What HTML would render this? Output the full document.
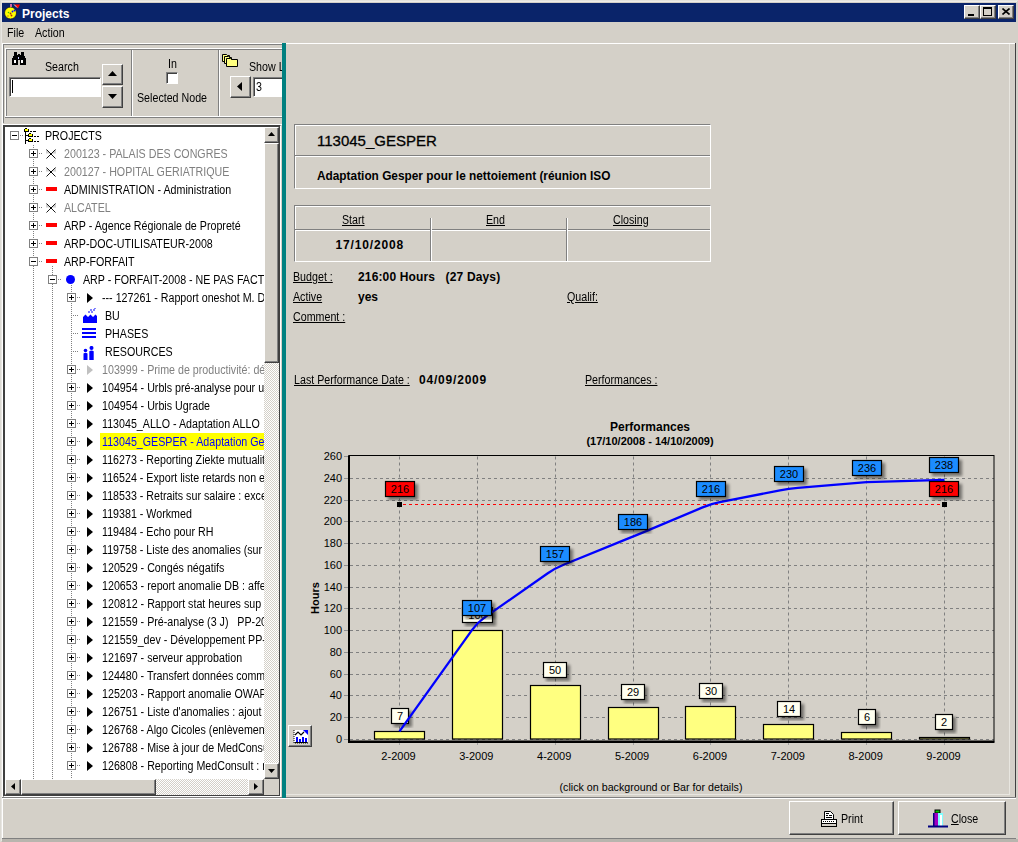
<!DOCTYPE html>
<html><head><meta charset="utf-8">
<style>
*{margin:0;padding:0;box-sizing:border-box}
html,body{width:1018px;height:842px;overflow:hidden;background:#D4D0C8;font-family:"Liberation Sans",sans-serif;font-size:11px;color:#000}
.a{position:absolute}
.t{position:absolute;white-space:pre;line-height:1}
.raised{position:absolute;background:#D4D0C8;border-top:1px solid #fff;border-left:1px solid #fff;border-right:1px solid #404040;border-bottom:1px solid #404040;box-shadow:inset -1px -1px 0 #808080}
.sunken{position:absolute;background:#fff;border-top:1px solid #808080;border-left:1px solid #808080;border-right:1px solid #fff;border-bottom:1px solid #fff;box-shadow:inset 1px 1px 0 #404040}
.tr,.w{font-size:12px;transform:scaleX(0.89);transform-origin:0 0}
.dith{background-color:#fff;background-image:linear-gradient(45deg,#D4D0C8 25%,transparent 25%,transparent 75%,#D4D0C8 75%),linear-gradient(45deg,#D4D0C8 25%,transparent 25%,transparent 75%,#D4D0C8 75%);background-size:2px 2px;background-position:0 0,1px 1px}
.hl{position:absolute;height:1px}
.vl{position:absolute;width:1px}
u{text-decoration:underline}
</style></head><body>
<!-- window frame -->
<div class="a" style="left:0;top:0;width:1018px;height:842px;border-top:1px solid #E4E2DC;border-left:1px solid #DCDAD4"></div>
<div class="a" style="left:1px;top:1px;width:1016px;height:840px;border-top:1px solid #EEECE8;border-left:1px solid #E8E6E2"></div>
<!-- title bar -->
<div class="a" style="left:2px;top:3px;width:1014px;height:19px;background:#0A246A"></div>
<svg class="a" style="left:3px;top:3px" width="19" height="18" viewBox="0 0 19 18">
<circle cx="7.5" cy="10" r="6" fill="#FFFF00" stroke="#101030" stroke-width="0.8"/>
<circle cx="9.5" cy="8.5" r="0.9" fill="#0000FF"/><circle cx="11.5" cy="7.5" r="0.9" fill="#0000FF"/>
<circle cx="7.5" cy="10.5" r="0.9" fill="#B03000"/><circle cx="8.5" cy="12.5" r="0.9" fill="#C02000"/>
<circle cx="5.5" cy="9.5" r="0.8" fill="#40C000"/><circle cx="5" cy="13" r="0.7" fill="#C06000"/>
<rect x="7" y="1" width="2" height="3" fill="#D060A0"/>
<path d="M11 1.5h6l-2 4z" fill="#FF0000"/><path d="M11 1.5l3 3" stroke="#fff" stroke-width="0.8"/>
</svg>
<div class="t" style="left:22px;top:8px;font-size:12px;font-weight:bold;color:#fff">Projects</div>
<!-- title buttons -->
<div class="raised" style="left:964px;top:5px;width:16px;height:14px"></div>
<div class="a" style="left:968px;top:14px;width:6px;height:2px;background:#000"></div>
<div class="raised" style="left:980px;top:5px;width:16px;height:14px"></div>
<div class="a" style="left:983px;top:7px;width:9px;height:9px;border:1px solid #000;border-top-width:2px"></div>
<div class="raised" style="left:998px;top:5px;width:16px;height:14px"></div>
<svg class="a" style="left:1002px;top:8px" width="8" height="7"><path d="M0.5 0.5L7.5 6.5M7.5 0.5L0.5 6.5" stroke="#000" stroke-width="1.6"/></svg>
<!-- menu -->
<div class="t w" style="left:6.5px;top:27px">File</div>
<div class="t w" style="left:35px;top:27px">Action</div>

<!-- toolbar panel -->
<div class="vl" style="left:2px;top:43px;height:795px;background:#fff"></div>
<div class="hl" style="left:2px;top:43px;width:280px;background:#fff"></div>
<div class="vl" style="left:3px;top:44px;height:81px;background:#808080"></div>
<div class="hl" style="left:3px;top:44px;width:279px;background:#808080"></div>
<!-- groupbox 1 -->
<div class="hl" style="left:5px;top:48px;width:277px;background:#fff"></div>
<div class="hl" style="left:6px;top:49px;width:276px;background:#808080"></div>
<div class="vl" style="left:5px;top:48px;height:69px;background:#fff"></div>
<div class="vl" style="left:6px;top:49px;height:67px;background:#808080"></div>
<div class="hl" style="left:5px;top:116px;width:277px;background:#fff"></div>
<div class="hl" style="left:5px;top:117px;width:277px;background:#808080"></div>
<div class="hl" style="left:3px;top:123px;width:279px;background:#D4D0C8"></div>
<div class="hl" style="left:3px;top:124px;width:279px;background:#fff"></div>
<div class="vl" style="left:131px;top:50px;height:66px;background:#808080"></div>
<div class="vl" style="left:132px;top:50px;height:66px;background:#fff"></div>
<div class="vl" style="left:218px;top:50px;height:66px;background:#808080"></div>
<div class="vl" style="left:219px;top:50px;height:66px;background:#fff"></div>
<!-- binoculars -->
<svg class="a" style="left:11px;top:52px" width="16" height="14" viewBox="0 0 16 14">
<path d="M3 0h3v3h1v-1h2v1h1v-3h3v4h1v2h1v7h-6v-5h-2v5h-6v-7h1v-2h1z" fill="#000"/>
<rect x="3" y="8" width="2" height="3" fill="#fff"/><rect x="10" y="8" width="2" height="3" fill="#fff"/>
<rect x="7" y="5" width="1" height="2" fill="#c8c8ff"/>
</svg>
<div class="t w" style="left:44.8px;top:61px">Search</div>
<div class="sunken" style="left:9px;top:77px;width:92px;height:20px"></div>
<div class="a" style="left:12px;top:80px;width:1px;height:13px;background:#000"></div>
<div class="raised" style="left:102px;top:64px;width:21px;height:21px"></div>
<svg class="a" style="left:108px;top:71px" width="9" height="5"><path d="M4.5 0L9 5H0z" fill="#000"/></svg>
<div class="raised" style="left:102px;top:86px;width:21px;height:22px"></div>
<svg class="a" style="left:108px;top:94px" width="9" height="5"><path d="M0 0H9L4.5 5z" fill="#000"/></svg>
<!-- in selected node -->
<div class="t w" style="left:167.5px;top:58px">In</div>
<div class="sunken" style="left:166px;top:72px;width:12px;height:12px"></div>
<div class="t w" style="left:136.6px;top:92px">Selected Node</div>
<!-- show levels -->
<svg class="a" style="left:222px;top:52px" width="17" height="15" viewBox="0 0 17 15">
<path d="M0.5 2.5h4l1 1h2v6h-7z" fill="#ffff80" stroke="#000"/>
<path d="M2.5 4.5h4l1 1h2v6h-7z" fill="#ffff80" stroke="#000"/>
<path d="M4.5 6.5h4l1 1h6v7h-11z" fill="#ffff80" stroke="#000"/>
</svg>
<div class="t w" style="left:248.5px;top:61px">Show L</div>
<div class="raised" style="left:230px;top:76px;width:21px;height:22px"></div>
<svg class="a" style="left:237px;top:82px" width="5" height="9"><path d="M5 0V9L0 4.5z" fill="#000"/></svg>
<div class="sunken" style="left:253px;top:77px;width:29px;height:20px;border-right:none"></div>
<div class="t w" style="left:256px;top:81px">3</div>

<!-- tree box -->
<div class="a" style="left:3px;top:125px;width:278px;height:672px;border-top:1px solid #404040;border-left:1px solid #404040;border-right:1px solid #fff;border-bottom:1px solid #fff"></div>
<div class="a" style="left:4px;top:126px;width:276px;height:670px;border-top:1px solid #404040;border-left:1px solid #404040;border-right:1px solid #404040;border-bottom:1px solid #404040"></div>
<div class="a" style="left:5px;top:127px;width:259px;height:652px;overflow:hidden;background:#fff">
<div class="a" style="left:28px;top:18px;width:1px;height:117px;background:repeating-linear-gradient(#808080 0 1px,transparent 1px 2px)"></div>
<div class="a" style="left:47px;top:139px;width:1px;height:15px;background:repeating-linear-gradient(#808080 0 1px,transparent 1px 2px)"></div>
<div class="a" style="left:66px;top:158px;width:1px;height:495px;background:repeating-linear-gradient(#808080 0 1px,transparent 1px 2px)"></div>
<div class="a" style="left:28px;top:139px;width:1px;height:514px;background:repeating-linear-gradient(#808080 0 1px,transparent 1px 2px)"></div>
<div class="a" style="left:47px;top:157px;width:1px;height:496px;background:repeating-linear-gradient(#808080 0 1px,transparent 1px 2px)"></div>
<div class="a" style="left:5px;top:4px;width:9px;height:9px;border:1px solid #808080;background:#fff"></div>
<div class="a" style="left:7px;top:8px;width:5px;height:1px;background:#000"></div>
<div class="a" style="left:15px;top:8px;width:4px;height:1px;background:repeating-linear-gradient(90deg,#808080 0 1px,transparent 1px 2px)"></div>
<svg class="a" style="left:19px;top:1px" width="16" height="16" viewBox="0 0 16 16" shape-rendering="crispEdges"><rect x="1" y="0" width="2" height="1" fill="#000"/><rect x="0" y="1" width="5" height="3" fill="#000"/><rect x="1" y="1" width="3" height="2" fill="#FFFF00"/><rect x="1" y="4" width="1" height="12" fill="#000"/><rect x="2" y="7" width="2" height="1" fill="#000"/><rect x="5" y="5" width="2" height="1" fill="#000"/><rect x="4" y="6" width="5" height="3" fill="#000"/><rect x="5" y="6" width="3" height="2" fill="#FFFF00"/><rect x="2" y="12" width="2" height="1" fill="#000"/><rect x="5" y="10" width="2" height="1" fill="#000"/><rect x="4" y="11" width="5" height="3" fill="#000"/><rect x="5" y="11" width="3" height="2" fill="#FFFF00"/><rect x="6" y="3" width="2" height="1" fill="#000"/><rect x="9" y="3" width="3" height="1" fill="#000"/><rect x="10" y="8" width="2" height="1" fill="#000"/><rect x="13" y="8" width="2" height="1" fill="#000"/><rect x="10" y="13" width="2" height="1" fill="#000"/><rect x="13" y="13" width="2" height="1" fill="#000"/></svg>
<div class="t tr" style="left:39.5px;top:3px;color:#000">PROJECTS</div>
<div class="a" style="left:24px;top:22px;width:9px;height:9px;border:1px solid #808080;background:#fff"></div>
<div class="a" style="left:26px;top:26px;width:5px;height:1px;background:#000"></div>
<div class="a" style="left:28px;top:24px;width:1px;height:5px;background:#000"></div>
<div class="a" style="left:34px;top:26px;width:4px;height:1px;background:repeating-linear-gradient(90deg,#808080 0 1px,transparent 1px 2px)"></div>
<svg class="a" style="left:41px;top:22px" width="11" height="11"><path d="M0 4.5L5 4.5L0 0.5zM10 4.5L5 4.5L10 0.5z" fill="#D0D0D0" transform="translate(0 0)"/><path d="M0.5 0.5L9.5 9.5M9.5 0.5L0.5 9.5" stroke="#000" stroke-width="0.9"/><rect x="4" y="4" width="2" height="2" fill="#000"/></svg>
<div class="t tr" style="left:58.5px;top:21px;color:#808080">200123 - PALAIS DES CONGRES</div>
<div class="a" style="left:24px;top:40px;width:9px;height:9px;border:1px solid #808080;background:#fff"></div>
<div class="a" style="left:26px;top:44px;width:5px;height:1px;background:#000"></div>
<div class="a" style="left:28px;top:42px;width:1px;height:5px;background:#000"></div>
<div class="a" style="left:34px;top:44px;width:4px;height:1px;background:repeating-linear-gradient(90deg,#808080 0 1px,transparent 1px 2px)"></div>
<svg class="a" style="left:41px;top:40px" width="11" height="11"><path d="M0 4.5L5 4.5L0 0.5zM10 4.5L5 4.5L10 0.5z" fill="#D0D0D0" transform="translate(0 0)"/><path d="M0.5 0.5L9.5 9.5M9.5 0.5L0.5 9.5" stroke="#000" stroke-width="0.9"/><rect x="4" y="4" width="2" height="2" fill="#000"/></svg>
<div class="t tr" style="left:58.5px;top:39px;color:#808080">200127 - HOPITAL GERIATRIQUE</div>
<div class="a" style="left:24px;top:58px;width:9px;height:9px;border:1px solid #808080;background:#fff"></div>
<div class="a" style="left:26px;top:62px;width:5px;height:1px;background:#000"></div>
<div class="a" style="left:28px;top:60px;width:1px;height:5px;background:#000"></div>
<div class="a" style="left:34px;top:62px;width:4px;height:1px;background:repeating-linear-gradient(90deg,#808080 0 1px,transparent 1px 2px)"></div>
<div class="a" style="left:41px;top:60px;width:11px;height:4px;background:#FF0000"></div>
<div class="t tr" style="left:58.5px;top:57px;color:#000">ADMINISTRATION - Administration</div>
<div class="a" style="left:24px;top:76px;width:9px;height:9px;border:1px solid #808080;background:#fff"></div>
<div class="a" style="left:26px;top:80px;width:5px;height:1px;background:#000"></div>
<div class="a" style="left:28px;top:78px;width:1px;height:5px;background:#000"></div>
<div class="a" style="left:34px;top:80px;width:4px;height:1px;background:repeating-linear-gradient(90deg,#808080 0 1px,transparent 1px 2px)"></div>
<svg class="a" style="left:41px;top:76px" width="11" height="11"><path d="M0 4.5L5 4.5L0 0.5zM10 4.5L5 4.5L10 0.5z" fill="#D0D0D0" transform="translate(0 0)"/><path d="M0.5 0.5L9.5 9.5M9.5 0.5L0.5 9.5" stroke="#000" stroke-width="0.9"/><rect x="4" y="4" width="2" height="2" fill="#000"/></svg>
<div class="t tr" style="left:58.5px;top:75px;color:#808080">ALCATEL</div>
<div class="a" style="left:24px;top:94px;width:9px;height:9px;border:1px solid #808080;background:#fff"></div>
<div class="a" style="left:26px;top:98px;width:5px;height:1px;background:#000"></div>
<div class="a" style="left:28px;top:96px;width:1px;height:5px;background:#000"></div>
<div class="a" style="left:34px;top:98px;width:4px;height:1px;background:repeating-linear-gradient(90deg,#808080 0 1px,transparent 1px 2px)"></div>
<div class="a" style="left:41px;top:96px;width:11px;height:4px;background:#FF0000"></div>
<div class="t tr" style="left:58.5px;top:93px;color:#000">ARP - Agence Régionale de Propreté</div>
<div class="a" style="left:24px;top:112px;width:9px;height:9px;border:1px solid #808080;background:#fff"></div>
<div class="a" style="left:26px;top:116px;width:5px;height:1px;background:#000"></div>
<div class="a" style="left:28px;top:114px;width:1px;height:5px;background:#000"></div>
<div class="a" style="left:34px;top:116px;width:4px;height:1px;background:repeating-linear-gradient(90deg,#808080 0 1px,transparent 1px 2px)"></div>
<div class="a" style="left:41px;top:114px;width:11px;height:4px;background:#FF0000"></div>
<div class="t tr" style="left:58.5px;top:111px;color:#000">ARP-DOC-UTILISATEUR-2008</div>
<div class="a" style="left:24px;top:130px;width:9px;height:9px;border:1px solid #808080;background:#fff"></div>
<div class="a" style="left:26px;top:134px;width:5px;height:1px;background:#000"></div>
<div class="a" style="left:34px;top:134px;width:4px;height:1px;background:repeating-linear-gradient(90deg,#808080 0 1px,transparent 1px 2px)"></div>
<div class="a" style="left:41px;top:132px;width:11px;height:4px;background:#FF0000"></div>
<div class="t tr" style="left:58.5px;top:129px;color:#000">ARP-FORFAIT</div>
<div class="a" style="left:43px;top:148px;width:9px;height:9px;border:1px solid #808080;background:#fff"></div>
<div class="a" style="left:45px;top:152px;width:5px;height:1px;background:#000"></div>
<div class="a" style="left:53px;top:152px;width:4px;height:1px;background:repeating-linear-gradient(90deg,#808080 0 1px,transparent 1px 2px)"></div>
<div class="a" style="left:61px;top:148px;width:9px;height:9px;border-radius:50%;background:#0000FF"></div>
<div class="t tr" style="left:77.5px;top:147px;color:#000">ARP - FORFAIT-2008 - NE PAS FACTURER</div>
<div class="a" style="left:62px;top:166px;width:9px;height:9px;border:1px solid #808080;background:#fff"></div>
<div class="a" style="left:64px;top:170px;width:5px;height:1px;background:#000"></div>
<div class="a" style="left:66px;top:168px;width:1px;height:5px;background:#000"></div>
<div class="a" style="left:72px;top:170px;width:4px;height:1px;background:repeating-linear-gradient(90deg,#808080 0 1px,transparent 1px 2px)"></div>
<svg class="a" style="left:82px;top:166px" width="6" height="10"><path d="M0 0L6 5L0 10z" fill="#000"/></svg>
<div class="t tr" style="left:96.5px;top:165px;color:#000">--- 127261 - Rapport oneshot M. Dupont</div>
<div class="a" style="left:66px;top:188px;width:8px;height:1px;background:repeating-linear-gradient(90deg,#808080 0 1px,transparent 1px 2px)"></div>
<svg class="a" style="left:78px;top:181px" width="14" height="15" viewBox="0 0 14 15"><path d="M0 15V9L2.5 6.5L5 9L7.5 6.5L10 9L12.5 6.5L14 8V15z" fill="#0000FF"/><path d="M5 4h2M8 4h2M7 2h2M10 2h2M11 0h2" stroke="#0000FF" stroke-width="1"/></svg>
<div class="t tr" style="left:99.8px;top:183px;color:#000">BU</div>
<div class="a" style="left:66px;top:206px;width:8px;height:1px;background:repeating-linear-gradient(90deg,#808080 0 1px,transparent 1px 2px)"></div>
<svg class="a" style="left:77px;top:201px" width="14" height="11"><rect x="0" y="0" width="14" height="2" fill="#0000FF"/><rect x="0" y="4" width="14" height="2" fill="#0000FF"/><rect x="0" y="8" width="14" height="2" fill="#0000FF"/></svg>
<div class="t tr" style="left:99.8px;top:201px;color:#000">PHASES</div>
<div class="a" style="left:66px;top:224px;width:8px;height:1px;background:repeating-linear-gradient(90deg,#808080 0 1px,transparent 1px 2px)"></div>
<svg class="a" style="left:78px;top:219px" width="12" height="15" viewBox="0 0 12 15"><circle cx="2.5" cy="4.5" r="1.8" fill="#0000FF"/><path d="M0.5 7.5q2-1.5 4 0V14h-4z" fill="#0000FF"/><circle cx="8.5" cy="1.9" r="2" fill="#0000FF"/><path d="M6.3 5.3q2.2-1.6 4.4 0V14h-4.4z" fill="#0000FF"/></svg>
<div class="t tr" style="left:99.8px;top:219px;color:#000">RESOURCES</div>
<div class="a" style="left:62px;top:238px;width:9px;height:9px;border:1px solid #808080;background:#fff"></div>
<div class="a" style="left:64px;top:242px;width:5px;height:1px;background:#000"></div>
<div class="a" style="left:66px;top:240px;width:1px;height:5px;background:#000"></div>
<div class="a" style="left:72px;top:242px;width:4px;height:1px;background:repeating-linear-gradient(90deg,#808080 0 1px,transparent 1px 2px)"></div>
<svg class="a" style="left:82px;top:238px" width="6" height="10"><path d="M0 0L6 5L0 10z" fill="#C0C0C0"/></svg>
<div class="t tr" style="left:96.5px;top:237px;color:#808080">103999 - Prime de productivité: détail</div>
<div class="a" style="left:62px;top:256px;width:9px;height:9px;border:1px solid #808080;background:#fff"></div>
<div class="a" style="left:64px;top:260px;width:5px;height:1px;background:#000"></div>
<div class="a" style="left:66px;top:258px;width:1px;height:5px;background:#000"></div>
<div class="a" style="left:72px;top:260px;width:4px;height:1px;background:repeating-linear-gradient(90deg,#808080 0 1px,transparent 1px 2px)"></div>
<svg class="a" style="left:82px;top:256px" width="6" height="10"><path d="M0 0L6 5L0 10z" fill="#000"/></svg>
<div class="t tr" style="left:96.5px;top:255px;color:#000">104954 - Urbls pré-analyse pour upgrade</div>
<div class="a" style="left:62px;top:274px;width:9px;height:9px;border:1px solid #808080;background:#fff"></div>
<div class="a" style="left:64px;top:278px;width:5px;height:1px;background:#000"></div>
<div class="a" style="left:66px;top:276px;width:1px;height:5px;background:#000"></div>
<div class="a" style="left:72px;top:278px;width:4px;height:1px;background:repeating-linear-gradient(90deg,#808080 0 1px,transparent 1px 2px)"></div>
<svg class="a" style="left:82px;top:274px" width="6" height="10"><path d="M0 0L6 5L0 10z" fill="#000"/></svg>
<div class="t tr" style="left:96.5px;top:273px;color:#000">104954 - Urbis Ugrade</div>
<div class="a" style="left:62px;top:292px;width:9px;height:9px;border:1px solid #808080;background:#fff"></div>
<div class="a" style="left:64px;top:296px;width:5px;height:1px;background:#000"></div>
<div class="a" style="left:66px;top:294px;width:1px;height:5px;background:#000"></div>
<div class="a" style="left:72px;top:296px;width:4px;height:1px;background:repeating-linear-gradient(90deg,#808080 0 1px,transparent 1px 2px)"></div>
<svg class="a" style="left:82px;top:292px" width="6" height="10"><path d="M0 0L6 5L0 10z" fill="#000"/></svg>
<div class="t tr" style="left:96.5px;top:291px;color:#000">113045_ALLO - Adaptation ALLO</div>
<div class="a" style="left:62px;top:310px;width:9px;height:9px;border:1px solid #808080;background:#fff"></div>
<div class="a" style="left:64px;top:314px;width:5px;height:1px;background:#000"></div>
<div class="a" style="left:66px;top:312px;width:1px;height:5px;background:#000"></div>
<div class="a" style="left:72px;top:314px;width:4px;height:1px;background:repeating-linear-gradient(90deg,#808080 0 1px,transparent 1px 2px)"></div>
<svg class="a" style="left:82px;top:310px" width="6" height="10"><path d="M0 0L6 5L0 10z" fill="#000"/></svg>
<div class="a" style="left:95px;top:306px;width:200px;height:17px;background:#FFFF00"></div>
<div class="t tr" style="left:96.5px;top:309px;color:#0000FF">113045_GESPER - Adaptation Gesper</div>
<div class="a" style="left:62px;top:328px;width:9px;height:9px;border:1px solid #808080;background:#fff"></div>
<div class="a" style="left:64px;top:332px;width:5px;height:1px;background:#000"></div>
<div class="a" style="left:66px;top:330px;width:1px;height:5px;background:#000"></div>
<div class="a" style="left:72px;top:332px;width:4px;height:1px;background:repeating-linear-gradient(90deg,#808080 0 1px,transparent 1px 2px)"></div>
<svg class="a" style="left:82px;top:328px" width="6" height="10"><path d="M0 0L6 5L0 10z" fill="#000"/></svg>
<div class="t tr" style="left:96.5px;top:327px;color:#000">116273 - Reporting Ziekte mutualiteit</div>
<div class="a" style="left:62px;top:346px;width:9px;height:9px;border:1px solid #808080;background:#fff"></div>
<div class="a" style="left:64px;top:350px;width:5px;height:1px;background:#000"></div>
<div class="a" style="left:66px;top:348px;width:1px;height:5px;background:#000"></div>
<div class="a" style="left:72px;top:350px;width:4px;height:1px;background:repeating-linear-gradient(90deg,#808080 0 1px,transparent 1px 2px)"></div>
<svg class="a" style="left:82px;top:346px" width="6" height="10"><path d="M0 0L6 5L0 10z" fill="#000"/></svg>
<div class="t tr" style="left:96.5px;top:345px;color:#000">116524 - Export liste retards non encodés</div>
<div class="a" style="left:62px;top:364px;width:9px;height:9px;border:1px solid #808080;background:#fff"></div>
<div class="a" style="left:64px;top:368px;width:5px;height:1px;background:#000"></div>
<div class="a" style="left:66px;top:366px;width:1px;height:5px;background:#000"></div>
<div class="a" style="left:72px;top:368px;width:4px;height:1px;background:repeating-linear-gradient(90deg,#808080 0 1px,transparent 1px 2px)"></div>
<svg class="a" style="left:82px;top:364px" width="6" height="10"><path d="M0 0L6 5L0 10z" fill="#000"/></svg>
<div class="t tr" style="left:96.5px;top:363px;color:#000">118533 - Retraits sur salaire : exception</div>
<div class="a" style="left:62px;top:382px;width:9px;height:9px;border:1px solid #808080;background:#fff"></div>
<div class="a" style="left:64px;top:386px;width:5px;height:1px;background:#000"></div>
<div class="a" style="left:66px;top:384px;width:1px;height:5px;background:#000"></div>
<div class="a" style="left:72px;top:386px;width:4px;height:1px;background:repeating-linear-gradient(90deg,#808080 0 1px,transparent 1px 2px)"></div>
<svg class="a" style="left:82px;top:382px" width="6" height="10"><path d="M0 0L6 5L0 10z" fill="#000"/></svg>
<div class="t tr" style="left:96.5px;top:381px;color:#000">119381 - Workmed</div>
<div class="a" style="left:62px;top:400px;width:9px;height:9px;border:1px solid #808080;background:#fff"></div>
<div class="a" style="left:64px;top:404px;width:5px;height:1px;background:#000"></div>
<div class="a" style="left:66px;top:402px;width:1px;height:5px;background:#000"></div>
<div class="a" style="left:72px;top:404px;width:4px;height:1px;background:repeating-linear-gradient(90deg,#808080 0 1px,transparent 1px 2px)"></div>
<svg class="a" style="left:82px;top:400px" width="6" height="10"><path d="M0 0L6 5L0 10z" fill="#000"/></svg>
<div class="t tr" style="left:96.5px;top:399px;color:#000">119484 - Echo pour RH</div>
<div class="a" style="left:62px;top:418px;width:9px;height:9px;border:1px solid #808080;background:#fff"></div>
<div class="a" style="left:64px;top:422px;width:5px;height:1px;background:#000"></div>
<div class="a" style="left:66px;top:420px;width:1px;height:5px;background:#000"></div>
<div class="a" style="left:72px;top:422px;width:4px;height:1px;background:repeating-linear-gradient(90deg,#808080 0 1px,transparent 1px 2px)"></div>
<svg class="a" style="left:82px;top:418px" width="6" height="10"><path d="M0 0L6 5L0 10z" fill="#000"/></svg>
<div class="t tr" style="left:96.5px;top:417px;color:#000">119758 - Liste des anomalies (sur Site)</div>
<div class="a" style="left:62px;top:436px;width:9px;height:9px;border:1px solid #808080;background:#fff"></div>
<div class="a" style="left:64px;top:440px;width:5px;height:1px;background:#000"></div>
<div class="a" style="left:66px;top:438px;width:1px;height:5px;background:#000"></div>
<div class="a" style="left:72px;top:440px;width:4px;height:1px;background:repeating-linear-gradient(90deg,#808080 0 1px,transparent 1px 2px)"></div>
<svg class="a" style="left:82px;top:436px" width="6" height="10"><path d="M0 0L6 5L0 10z" fill="#000"/></svg>
<div class="t tr" style="left:96.5px;top:435px;color:#000">120529 - Congés négatifs</div>
<div class="a" style="left:62px;top:454px;width:9px;height:9px;border:1px solid #808080;background:#fff"></div>
<div class="a" style="left:64px;top:458px;width:5px;height:1px;background:#000"></div>
<div class="a" style="left:66px;top:456px;width:1px;height:5px;background:#000"></div>
<div class="a" style="left:72px;top:458px;width:4px;height:1px;background:repeating-linear-gradient(90deg,#808080 0 1px,transparent 1px 2px)"></div>
<svg class="a" style="left:82px;top:454px" width="6" height="10"><path d="M0 0L6 5L0 10z" fill="#000"/></svg>
<div class="t tr" style="left:96.5px;top:453px;color:#000">120653 - report anomalie DB : affectation</div>
<div class="a" style="left:62px;top:472px;width:9px;height:9px;border:1px solid #808080;background:#fff"></div>
<div class="a" style="left:64px;top:476px;width:5px;height:1px;background:#000"></div>
<div class="a" style="left:66px;top:474px;width:1px;height:5px;background:#000"></div>
<div class="a" style="left:72px;top:476px;width:4px;height:1px;background:repeating-linear-gradient(90deg,#808080 0 1px,transparent 1px 2px)"></div>
<svg class="a" style="left:82px;top:472px" width="6" height="10"><path d="M0 0L6 5L0 10z" fill="#000"/></svg>
<div class="t tr" style="left:96.5px;top:471px;color:#000">120812 - Rapport stat heures sup</div>
<div class="a" style="left:62px;top:490px;width:9px;height:9px;border:1px solid #808080;background:#fff"></div>
<div class="a" style="left:64px;top:494px;width:5px;height:1px;background:#000"></div>
<div class="a" style="left:66px;top:492px;width:1px;height:5px;background:#000"></div>
<div class="a" style="left:72px;top:494px;width:4px;height:1px;background:repeating-linear-gradient(90deg,#808080 0 1px,transparent 1px 2px)"></div>
<svg class="a" style="left:82px;top:490px" width="6" height="10"><path d="M0 0L6 5L0 10z" fill="#000"/></svg>
<div class="t tr" style="left:96.5px;top:489px;color:#000">121559 - Pré-analyse (3 J)   PP-2009</div>
<div class="a" style="left:62px;top:508px;width:9px;height:9px;border:1px solid #808080;background:#fff"></div>
<div class="a" style="left:64px;top:512px;width:5px;height:1px;background:#000"></div>
<div class="a" style="left:66px;top:510px;width:1px;height:5px;background:#000"></div>
<div class="a" style="left:72px;top:512px;width:4px;height:1px;background:repeating-linear-gradient(90deg,#808080 0 1px,transparent 1px 2px)"></div>
<svg class="a" style="left:82px;top:508px" width="6" height="10"><path d="M0 0L6 5L0 10z" fill="#000"/></svg>
<div class="t tr" style="left:96.5px;top:507px;color:#000">121559_dev - Développement PP-2009</div>
<div class="a" style="left:62px;top:526px;width:9px;height:9px;border:1px solid #808080;background:#fff"></div>
<div class="a" style="left:64px;top:530px;width:5px;height:1px;background:#000"></div>
<div class="a" style="left:66px;top:528px;width:1px;height:5px;background:#000"></div>
<div class="a" style="left:72px;top:530px;width:4px;height:1px;background:repeating-linear-gradient(90deg,#808080 0 1px,transparent 1px 2px)"></div>
<svg class="a" style="left:82px;top:526px" width="6" height="10"><path d="M0 0L6 5L0 10z" fill="#000"/></svg>
<div class="t tr" style="left:96.5px;top:525px;color:#000">121697 - serveur approbation</div>
<div class="a" style="left:62px;top:544px;width:9px;height:9px;border:1px solid #808080;background:#fff"></div>
<div class="a" style="left:64px;top:548px;width:5px;height:1px;background:#000"></div>
<div class="a" style="left:66px;top:546px;width:1px;height:5px;background:#000"></div>
<div class="a" style="left:72px;top:548px;width:4px;height:1px;background:repeating-linear-gradient(90deg,#808080 0 1px,transparent 1px 2px)"></div>
<svg class="a" style="left:82px;top:544px" width="6" height="10"><path d="M0 0L6 5L0 10z" fill="#000"/></svg>
<div class="t tr" style="left:96.5px;top:543px;color:#000">124480 - Transfert données commandes</div>
<div class="a" style="left:62px;top:562px;width:9px;height:9px;border:1px solid #808080;background:#fff"></div>
<div class="a" style="left:64px;top:566px;width:5px;height:1px;background:#000"></div>
<div class="a" style="left:66px;top:564px;width:1px;height:5px;background:#000"></div>
<div class="a" style="left:72px;top:566px;width:4px;height:1px;background:repeating-linear-gradient(90deg,#808080 0 1px,transparent 1px 2px)"></div>
<svg class="a" style="left:82px;top:562px" width="6" height="10"><path d="M0 0L6 5L0 10z" fill="#000"/></svg>
<div class="t tr" style="left:96.5px;top:561px;color:#000">125203 - Rapport anomalie OWAP</div>
<div class="a" style="left:62px;top:580px;width:9px;height:9px;border:1px solid #808080;background:#fff"></div>
<div class="a" style="left:64px;top:584px;width:5px;height:1px;background:#000"></div>
<div class="a" style="left:66px;top:582px;width:1px;height:5px;background:#000"></div>
<div class="a" style="left:72px;top:584px;width:4px;height:1px;background:repeating-linear-gradient(90deg,#808080 0 1px,transparent 1px 2px)"></div>
<svg class="a" style="left:82px;top:580px" width="6" height="10"><path d="M0 0L6 5L0 10z" fill="#000"/></svg>
<div class="t tr" style="left:96.5px;top:579px;color:#000">126751 - Liste d'anomalies : ajout de</div>
<div class="a" style="left:62px;top:598px;width:9px;height:9px;border:1px solid #808080;background:#fff"></div>
<div class="a" style="left:64px;top:602px;width:5px;height:1px;background:#000"></div>
<div class="a" style="left:66px;top:600px;width:1px;height:5px;background:#000"></div>
<div class="a" style="left:72px;top:602px;width:4px;height:1px;background:repeating-linear-gradient(90deg,#808080 0 1px,transparent 1px 2px)"></div>
<svg class="a" style="left:82px;top:598px" width="6" height="10"><path d="M0 0L6 5L0 10z" fill="#000"/></svg>
<div class="t tr" style="left:96.5px;top:597px;color:#000">126768 - Algo Cicoles (enlèvement)</div>
<div class="a" style="left:62px;top:616px;width:9px;height:9px;border:1px solid #808080;background:#fff"></div>
<div class="a" style="left:64px;top:620px;width:5px;height:1px;background:#000"></div>
<div class="a" style="left:66px;top:618px;width:1px;height:5px;background:#000"></div>
<div class="a" style="left:72px;top:620px;width:4px;height:1px;background:repeating-linear-gradient(90deg,#808080 0 1px,transparent 1px 2px)"></div>
<svg class="a" style="left:82px;top:616px" width="6" height="10"><path d="M0 0L6 5L0 10z" fill="#000"/></svg>
<div class="t tr" style="left:96.5px;top:615px;color:#000">126788 - Mise à jour de MedConsult</div>
<div class="a" style="left:62px;top:634px;width:9px;height:9px;border:1px solid #808080;background:#fff"></div>
<div class="a" style="left:64px;top:638px;width:5px;height:1px;background:#000"></div>
<div class="a" style="left:66px;top:636px;width:1px;height:5px;background:#000"></div>
<div class="a" style="left:72px;top:638px;width:4px;height:1px;background:repeating-linear-gradient(90deg,#808080 0 1px,transparent 1px 2px)"></div>
<svg class="a" style="left:82px;top:634px" width="6" height="10"><path d="M0 0L6 5L0 10z" fill="#000"/></svg>
<div class="t tr" style="left:96.5px;top:633px;color:#000">126808 - Reporting MedConsult : maj</div>
</div>
<!-- vertical scrollbar -->
<div class="a dith" style="left:264px;top:127px;width:15px;height:652px"></div>
<div class="raised" style="left:264px;top:127px;width:15px;height:16px"></div>
<svg class="a" style="left:268px;top:132px" width="7" height="4"><path d="M3.5 0L7 4H0z" fill="#000"/></svg>
<div class="raised" style="left:264px;top:143px;width:15px;height:220px"></div>
<div class="raised" style="left:264px;top:763px;width:15px;height:16px"></div>
<svg class="a" style="left:268px;top:769px" width="7" height="4"><path d="M0 0H7L3.5 4z" fill="#000"/></svg>
<!-- horizontal scrollbar -->
<div class="a dith" style="left:5px;top:779px;width:259px;height:16px"></div>
<div class="raised" style="left:5px;top:779px;width:16px;height:16px"></div>
<svg class="a" style="left:11px;top:783px" width="4" height="7"><path d="M4 0V7L0 3.5z" fill="#000"/></svg>
<div class="raised" style="left:21px;top:779px;width:135px;height:16px"></div>
<div class="raised" style="left:248px;top:779px;width:16px;height:16px"></div>
<svg class="a" style="left:254px;top:783px" width="4" height="7"><path d="M0 0L4 3.5L0 7z" fill="#000"/></svg>
<div class="a" style="left:264px;top:779px;width:15px;height:16px;background:#D4D0C8"></div>

<!-- right panel frame -->
<div class="hl" style="left:286px;top:43px;width:730px;background:#fff"></div>
<div class="vl" style="left:1015px;top:43px;height:754px;background:#404040"></div>
<div class="vl" style="left:1009px;top:44px;height:750px;background:#E8E6E0"></div>
<div class="hl" style="left:286px;top:794px;width:724px;background:#E8E6E0"></div>
<!-- header box 1 -->
<div class="a" style="left:294px;top:124px;width:417px;height:65px;border-top:1px solid #808080;border-left:1px solid #808080;border-right:1px solid #fff;border-bottom:1px solid #fff;box-shadow:inset 1px 1px 0 #fff"></div>
<div class="hl" style="left:295px;top:155px;width:415px;background:#808080"></div>
<div class="hl" style="left:295px;top:156px;width:415px;background:#fff"></div>
<div class="t" style="left:317px;top:133px;font-size:15px;-webkit-text-stroke:0.3px #000">113045_GESPER</div>
<div class="t" style="left:317px;top:170.5px;font-size:11.85px;font-weight:bold">Adaptation Gesper pour le nettoiement (réunion ISO</div>
<!-- header box 2 -->
<div class="a" style="left:294px;top:205px;width:417px;height:57px;border-top:1px solid #808080;border-left:1px solid #808080;border-right:1px solid #fff;border-bottom:1px solid #fff;box-shadow:inset 1px 1px 0 #fff"></div>
<div class="hl" style="left:295px;top:229px;width:415px;background:#808080"></div>
<div class="hl" style="left:295px;top:230px;width:415px;background:#fff"></div>
<div class="vl" style="left:430px;top:218px;height:43px;background:#808080"></div>
<div class="vl" style="left:431px;top:218px;height:43px;background:#fff"></div>
<div class="vl" style="left:566px;top:218px;height:43px;background:#808080"></div>
<div class="vl" style="left:567px;top:218px;height:43px;background:#fff"></div>
<div class="t w" style="left:341.7px;top:214px"><u>Start</u></div>
<div class="t w" style="left:485.7px;top:214px"><u>End</u></div>
<div class="t w" style="left:613px;top:214px"><u>Closing</u></div>
<div class="t" style="left:335.5px;top:239px;font-size:12px;font-weight:bold;letter-spacing:0.85px">17/10/2008</div>
<!-- info -->
<div class="t w" style="left:293.4px;top:271px"><u>Budget :</u></div>
<div class="t" style="left:358px;top:271px;font-size:12px;font-weight:bold;letter-spacing:0.15px">216:00 Hours   (27 Days)</div>
<div class="t w" style="left:293.4px;top:291px"><u>Active</u></div>
<div class="t" style="left:358px;top:291px;font-size:12px;font-weight:bold">yes</div>
<div class="t w" style="left:566.5px;top:291px"><u>Qualif:</u></div>
<div class="t w" style="left:293.4px;top:311px"><u>Comment :</u></div>
<div class="t w" style="left:293.6px;top:374px"><u>Last Performance Date :</u></div>
<div class="t" style="left:419px;top:374px;font-size:12px;font-weight:bold;letter-spacing:0.8px">04/09/2009</div>
<div class="t w" style="left:585px;top:374px"><u>Performances :</u></div>
<svg class="a" style="left:0;top:0" width="1018" height="842" viewBox="0 0 1018 842">
<defs><filter id="sh" x="-30%" y="-30%" width="160%" height="160%"><feGaussianBlur in="SourceAlpha" stdDeviation="1.5"/><feOffset dx="3" dy="3"/><feComponentTransfer><feFuncA type="linear" slope="0.45"/></feComponentTransfer><feMerge><feMergeNode/><feMergeNode in="SourceGraphic"/></feMerge></filter></defs>
<line x1="350" y1="739.5" x2="994" y2="739.5" stroke="#808080" stroke-width="1" stroke-dasharray="3 3"/>
<line x1="344" y1="739.5" x2="348" y2="739.5" stroke="#909090" stroke-width="1"/>
<line x1="350" y1="717.5" x2="994" y2="717.5" stroke="#808080" stroke-width="1" stroke-dasharray="3 3"/>
<line x1="344" y1="717.5" x2="348" y2="717.5" stroke="#909090" stroke-width="1"/>
<line x1="350" y1="695.5" x2="994" y2="695.5" stroke="#808080" stroke-width="1" stroke-dasharray="3 3"/>
<line x1="344" y1="695.5" x2="348" y2="695.5" stroke="#909090" stroke-width="1"/>
<line x1="350" y1="674.5" x2="994" y2="674.5" stroke="#808080" stroke-width="1" stroke-dasharray="3 3"/>
<line x1="344" y1="674.5" x2="348" y2="674.5" stroke="#909090" stroke-width="1"/>
<line x1="350" y1="652.5" x2="994" y2="652.5" stroke="#808080" stroke-width="1" stroke-dasharray="3 3"/>
<line x1="344" y1="652.5" x2="348" y2="652.5" stroke="#909090" stroke-width="1"/>
<line x1="350" y1="630.5" x2="994" y2="630.5" stroke="#808080" stroke-width="1" stroke-dasharray="3 3"/>
<line x1="344" y1="630.5" x2="348" y2="630.5" stroke="#909090" stroke-width="1"/>
<line x1="350" y1="608.5" x2="994" y2="608.5" stroke="#808080" stroke-width="1" stroke-dasharray="3 3"/>
<line x1="344" y1="608.5" x2="348" y2="608.5" stroke="#909090" stroke-width="1"/>
<line x1="350" y1="587.5" x2="994" y2="587.5" stroke="#808080" stroke-width="1" stroke-dasharray="3 3"/>
<line x1="344" y1="587.5" x2="348" y2="587.5" stroke="#909090" stroke-width="1"/>
<line x1="350" y1="565.5" x2="994" y2="565.5" stroke="#808080" stroke-width="1" stroke-dasharray="3 3"/>
<line x1="344" y1="565.5" x2="348" y2="565.5" stroke="#909090" stroke-width="1"/>
<line x1="350" y1="543.5" x2="994" y2="543.5" stroke="#808080" stroke-width="1" stroke-dasharray="3 3"/>
<line x1="344" y1="543.5" x2="348" y2="543.5" stroke="#909090" stroke-width="1"/>
<line x1="350" y1="521.5" x2="994" y2="521.5" stroke="#808080" stroke-width="1" stroke-dasharray="3 3"/>
<line x1="344" y1="521.5" x2="348" y2="521.5" stroke="#909090" stroke-width="1"/>
<line x1="350" y1="500.5" x2="994" y2="500.5" stroke="#808080" stroke-width="1" stroke-dasharray="3 3"/>
<line x1="344" y1="500.5" x2="348" y2="500.5" stroke="#909090" stroke-width="1"/>
<line x1="350" y1="478.5" x2="994" y2="478.5" stroke="#808080" stroke-width="1" stroke-dasharray="3 3"/>
<line x1="344" y1="478.5" x2="348" y2="478.5" stroke="#909090" stroke-width="1"/>
<line x1="344" y1="456.5" x2="348" y2="456.5" stroke="#909090" stroke-width="1"/>
<line x1="399.5" y1="456.5" x2="399.5" y2="741" stroke="#808080" stroke-width="1" stroke-dasharray="3 3"/>
<line x1="399.5" y1="741" x2="399.5" y2="745" stroke="#A0A0A0" stroke-width="1"/>
<line x1="477.5" y1="456.5" x2="477.5" y2="741" stroke="#808080" stroke-width="1" stroke-dasharray="3 3"/>
<line x1="477.5" y1="741" x2="477.5" y2="745" stroke="#A0A0A0" stroke-width="1"/>
<line x1="555.5" y1="456.5" x2="555.5" y2="741" stroke="#808080" stroke-width="1" stroke-dasharray="3 3"/>
<line x1="555.5" y1="741" x2="555.5" y2="745" stroke="#A0A0A0" stroke-width="1"/>
<line x1="633.5" y1="456.5" x2="633.5" y2="741" stroke="#808080" stroke-width="1" stroke-dasharray="3 3"/>
<line x1="633.5" y1="741" x2="633.5" y2="745" stroke="#A0A0A0" stroke-width="1"/>
<line x1="710.5" y1="456.5" x2="710.5" y2="741" stroke="#808080" stroke-width="1" stroke-dasharray="3 3"/>
<line x1="710.5" y1="741" x2="710.5" y2="745" stroke="#A0A0A0" stroke-width="1"/>
<line x1="788.5" y1="456.5" x2="788.5" y2="741" stroke="#808080" stroke-width="1" stroke-dasharray="3 3"/>
<line x1="788.5" y1="741" x2="788.5" y2="745" stroke="#A0A0A0" stroke-width="1"/>
<line x1="866.5" y1="456.5" x2="866.5" y2="741" stroke="#808080" stroke-width="1" stroke-dasharray="3 3"/>
<line x1="866.5" y1="741" x2="866.5" y2="745" stroke="#A0A0A0" stroke-width="1"/>
<line x1="944.5" y1="456.5" x2="944.5" y2="741" stroke="#808080" stroke-width="1" stroke-dasharray="3 3"/>
<line x1="944.5" y1="741" x2="944.5" y2="745" stroke="#A0A0A0" stroke-width="1"/>
<rect x="349" y="455.5" width="645" height="285.5" fill="none" stroke="#000" stroke-width="1"/>
<line x1="349" y1="455.5" x2="349" y2="742" stroke="#000" stroke-width="2"/>
<line x1="348" y1="742" x2="994.5" y2="742" stroke="#000" stroke-width="2"/>
<text x="342" y="743.0" text-anchor="end" font-size="11" font-family="Liberation Sans">0</text>
<text x="342" y="721.23" text-anchor="end" font-size="11" font-family="Liberation Sans">20</text>
<text x="342" y="699.46" text-anchor="end" font-size="11" font-family="Liberation Sans">40</text>
<text x="342" y="677.69" text-anchor="end" font-size="11" font-family="Liberation Sans">60</text>
<text x="342" y="655.92" text-anchor="end" font-size="11" font-family="Liberation Sans">80</text>
<text x="342" y="634.15" text-anchor="end" font-size="11" font-family="Liberation Sans">100</text>
<text x="342" y="612.38" text-anchor="end" font-size="11" font-family="Liberation Sans">120</text>
<text x="342" y="590.61" text-anchor="end" font-size="11" font-family="Liberation Sans">140</text>
<text x="342" y="568.84" text-anchor="end" font-size="11" font-family="Liberation Sans">160</text>
<text x="342" y="547.0699999999999" text-anchor="end" font-size="11" font-family="Liberation Sans">180</text>
<text x="342" y="525.3" text-anchor="end" font-size="11" font-family="Liberation Sans">200</text>
<text x="342" y="503.53" text-anchor="end" font-size="11" font-family="Liberation Sans">220</text>
<text x="342" y="481.76" text-anchor="end" font-size="11" font-family="Liberation Sans">240</text>
<text x="342" y="459.99" text-anchor="end" font-size="11" font-family="Liberation Sans">260</text>
<text x="398.5" y="760" text-anchor="middle" font-size="11" font-family="Liberation Sans">2-2009</text>
<text x="476.35699999999997" y="760" text-anchor="middle" font-size="11" font-family="Liberation Sans">3-2009</text>
<text x="554.2139999999999" y="760" text-anchor="middle" font-size="11" font-family="Liberation Sans">4-2009</text>
<text x="632.071" y="760" text-anchor="middle" font-size="11" font-family="Liberation Sans">5-2009</text>
<text x="709.928" y="760" text-anchor="middle" font-size="11" font-family="Liberation Sans">6-2009</text>
<text x="787.785" y="760" text-anchor="middle" font-size="11" font-family="Liberation Sans">7-2009</text>
<text x="865.642" y="760" text-anchor="middle" font-size="11" font-family="Liberation Sans">8-2009</text>
<text x="943.499" y="760" text-anchor="middle" font-size="11" font-family="Liberation Sans">9-2009</text>
<line x1="403" y1="504.5" x2="941" y2="504.5" stroke="#FF0000" stroke-width="1" stroke-dasharray="3 3"/>
<rect x="397" y="502" width="5" height="5" fill="#000"/>
<rect x="942" y="502" width="5" height="5" fill="#000"/>
<rect x="374.5" y="731.5" width="50" height="7.5" fill="#FFFF80" stroke="#000" stroke-width="1.2"/>
<rect x="452.5" y="630.5" width="50" height="108.5" fill="#FFFF80" stroke="#000" stroke-width="1.2"/>
<rect x="530.5" y="685.5" width="50" height="53.5" fill="#FFFF80" stroke="#000" stroke-width="1.2"/>
<rect x="608.5" y="707.5" width="50" height="31.5" fill="#FFFF80" stroke="#000" stroke-width="1.2"/>
<rect x="685.5" y="706.5" width="50" height="32.5" fill="#FFFF80" stroke="#000" stroke-width="1.2"/>
<rect x="763.5" y="724.5" width="50" height="14.5" fill="#FFFF80" stroke="#000" stroke-width="1.2"/>
<rect x="841.5" y="732.5" width="50" height="6.5" fill="#FFFF80" stroke="#000" stroke-width="1.2"/>
<rect x="919.5" y="737.5" width="50" height="1.5" fill="#FFFF80" stroke="#000" stroke-width="1.2"/>
<g filter="url(#sh)"><rect x="391.5" y="708.5" width="17" height="15" fill="#FFFFF0" stroke="#000" stroke-width="1.2"/></g>
<text x="400.0" y="720.0" text-anchor="middle" font-size="11" font-family="Liberation Sans">7</text>
<g filter="url(#sh)"><rect x="462.5" y="607.5" width="30" height="15" fill="#FFFFF0" stroke="#000" stroke-width="1.2"/></g>
<text x="477.5" y="619.0" text-anchor="middle" font-size="11" font-family="Liberation Sans">100</text>
<g filter="url(#sh)"><rect x="543.5" y="662.5" width="23" height="15" fill="#FFFFF0" stroke="#000" stroke-width="1.2"/></g>
<text x="555.0" y="674.0" text-anchor="middle" font-size="11" font-family="Liberation Sans">50</text>
<g filter="url(#sh)"><rect x="621.5" y="684.5" width="23" height="15" fill="#FFFFF0" stroke="#000" stroke-width="1.2"/></g>
<text x="633.0" y="696.0" text-anchor="middle" font-size="11" font-family="Liberation Sans">29</text>
<g filter="url(#sh)"><rect x="699.5" y="683.5" width="23" height="15" fill="#FFFFF0" stroke="#000" stroke-width="1.2"/></g>
<text x="711.0" y="695.0" text-anchor="middle" font-size="11" font-family="Liberation Sans">30</text>
<g filter="url(#sh)"><rect x="777.5" y="701.5" width="23" height="15" fill="#FFFFF0" stroke="#000" stroke-width="1.2"/></g>
<text x="789.0" y="713.0" text-anchor="middle" font-size="11" font-family="Liberation Sans">14</text>
<g filter="url(#sh)"><rect x="858.5" y="709.5" width="17" height="15" fill="#FFFFF0" stroke="#000" stroke-width="1.2"/></g>
<text x="867.0" y="721.0" text-anchor="middle" font-size="11" font-family="Liberation Sans">6</text>
<g filter="url(#sh)"><rect x="935.5" y="714.5" width="17" height="15" fill="#FFFFF0" stroke="#000" stroke-width="1.2"/></g>
<text x="944.0" y="726.0" text-anchor="middle" font-size="11" font-family="Liberation Sans">2</text>
<path d="M399.5 731.4 L472.1 629.9 Q477.4 622.5 484.7 617.4 L547.8 573.3 Q555.2 568.1 563.6 564.7 L624.7 539.9 Q633.1 536.5 641.4 533.1 L702.6 507.4 Q710.9 503.9 719.8 502.2 L780.0 490.4 Q788.8 488.6 797.8 487.9 L857.7 482.9 Q866.6 482.1 875.6 481.9 L944.5 479.9" fill="none" stroke="#0000FF" stroke-width="2.3"/>
<g filter="url(#sh)"><rect x="462.5" y="600.5" width="29" height="15" fill="#1A8CFF" stroke="#000" stroke-width="1.2"/></g>
<text x="477.0" y="612.0" text-anchor="middle" font-size="11" font-family="Liberation Sans">107</text>
<g filter="url(#sh)"><rect x="540.5" y="546.5" width="29" height="15" fill="#1A8CFF" stroke="#000" stroke-width="1.2"/></g>
<text x="555.0" y="558.0" text-anchor="middle" font-size="11" font-family="Liberation Sans">157</text>
<g filter="url(#sh)"><rect x="618.5" y="514.5" width="29" height="15" fill="#1A8CFF" stroke="#000" stroke-width="1.2"/></g>
<text x="633.0" y="526.0" text-anchor="middle" font-size="11" font-family="Liberation Sans">186</text>
<g filter="url(#sh)"><rect x="696.5" y="481.5" width="29" height="15" fill="#1A8CFF" stroke="#000" stroke-width="1.2"/></g>
<text x="711.0" y="493.0" text-anchor="middle" font-size="11" font-family="Liberation Sans">216</text>
<g filter="url(#sh)"><rect x="774.5" y="466.5" width="29" height="15" fill="#1A8CFF" stroke="#000" stroke-width="1.2"/></g>
<text x="789.0" y="478.0" text-anchor="middle" font-size="11" font-family="Liberation Sans">230</text>
<g filter="url(#sh)"><rect x="852.5" y="460.5" width="29" height="15" fill="#1A8CFF" stroke="#000" stroke-width="1.2"/></g>
<text x="867.0" y="472.0" text-anchor="middle" font-size="11" font-family="Liberation Sans">236</text>
<g filter="url(#sh)"><rect x="929.5" y="457.5" width="29" height="15" fill="#1A8CFF" stroke="#000" stroke-width="1.2"/></g>
<text x="944.0" y="469.0" text-anchor="middle" font-size="11" font-family="Liberation Sans">238</text>
<g filter="url(#sh)"><rect x="385.5" y="481.5" width="29" height="15" fill="#FF0000" stroke="#000" stroke-width="1.2"/></g>
<text x="400.0" y="493.0" text-anchor="middle" font-size="11" font-family="Liberation Sans">216</text>
<g filter="url(#sh)"><rect x="929.5" y="481.5" width="29" height="15" fill="#FF0000" stroke="#000" stroke-width="1.2"/></g>
<text x="944.0" y="493.0" text-anchor="middle" font-size="11" font-family="Liberation Sans">216</text>
<text x="650" y="431" text-anchor="middle" font-size="12" font-weight="bold" font-family="Liberation Sans">Performances</text>
<text x="650" y="445" text-anchor="middle" font-size="11" font-weight="bold" font-family="Liberation Sans">(17/10/2008 - 14/10/2009)</text>
<text transform="translate(318.5 598) rotate(-90)" text-anchor="middle" font-size="11" font-weight="bold" font-family="Liberation Sans">Hours</text>
<text x="651" y="791" text-anchor="middle" font-size="10.7" font-family="Liberation Sans">(click on background or Bar for details)</text>
</svg>
<!-- chart button -->
<div class="raised" style="left:288px;top:725px;width:24px;height:22px"></div>
<svg class="a" style="left:293px;top:728px" width="16" height="16" viewBox="0 0 16 16">
<rect x="1" y="2" width="14" height="13" fill="#fff"/>
<path d="M1 2v13h14" fill="none" stroke="#000" stroke-width="1" stroke-dasharray="1 1"/>
<path d="M2 7L5 4L8 7L11 4" fill="none" stroke="#000" stroke-width="1.2"/>
<path d="M10 2h5v5z" fill="#0000FF"/>
<rect x="3" y="9" width="2" height="5" fill="#0000FF"/><rect x="6" y="11" width="2" height="3" fill="#0000FF"/><rect x="9" y="9" width="2" height="5" fill="#0000FF"/><rect x="12" y="10" width="2" height="4" fill="#0000FF"/>
<path d="M1.5 14.5h13" stroke="#000"/>
</svg>
<!-- status panel -->
<div class="hl" style="left:2px;top:797px;width:1014px;background:#808080"></div>
<div class="hl" style="left:2px;top:798px;width:1014px;background:#fff"></div>
<div class="hl" style="left:2px;top:838px;width:1014px;background:#808080"></div>
<div class="a" style="left:2px;top:839px;width:1016px;height:3px;background:#B8B5AE"></div>
<!-- buttons -->
<div class="raised" style="left:789px;top:801px;width:105px;height:34px"></div>
<svg class="a" style="left:821px;top:811px" width="16" height="16" viewBox="0 0 16 16">
<path d="M3.5 0.5h6l3 3v5h-9z" fill="#fff" stroke="#000"/>
<rect x="5" y="2" width="3" height="1" fill="#000"/><rect x="5" y="4" width="2" height="1" fill="#000"/><rect x="8" y="4" width="3" height="1" fill="#000"/><rect x="5" y="6" width="6" height="1" fill="#000"/>
<rect x="0.5" y="8.5" width="15" height="4" fill="#fff" stroke="#000"/>
<path d="M2 10.5h12" stroke="#000" stroke-dasharray="1 1"/>
<rect x="0.5" y="12.5" width="15" height="3" fill="#D4D0C8" stroke="#000"/>
</svg>
<div class="t w" style="left:841px;top:813px">Print</div>
<div class="raised" style="left:898px;top:801px;width:108px;height:34px"></div>
<svg class="a" style="left:928px;top:809px" width="20" height="19" viewBox="0 0 20 19">
<rect x="7" y="1" width="5" height="3" fill="#00C000" stroke="#000" stroke-width="1"/>
<rect x="5" y="4" width="5" height="13" fill="#A000C0"/>
<rect x="5" y="4" width="1.5" height="13" fill="#000080"/>
<rect x="10" y="4" width="5" height="13" fill="#80FFFF"/>
<rect x="12" y="6" width="2" height="11" fill="#fff"/>
<path d="M0 17.5h20" stroke="#000080" stroke-width="2"/>
</svg>
<div class="t w" style="left:951px;top:813px"><u>C</u>lose</div>
<!-- splitter -->
<div class="a" style="left:282px;top:43px;width:4px;height:755px;background:#008080"></div>
</body></html>
